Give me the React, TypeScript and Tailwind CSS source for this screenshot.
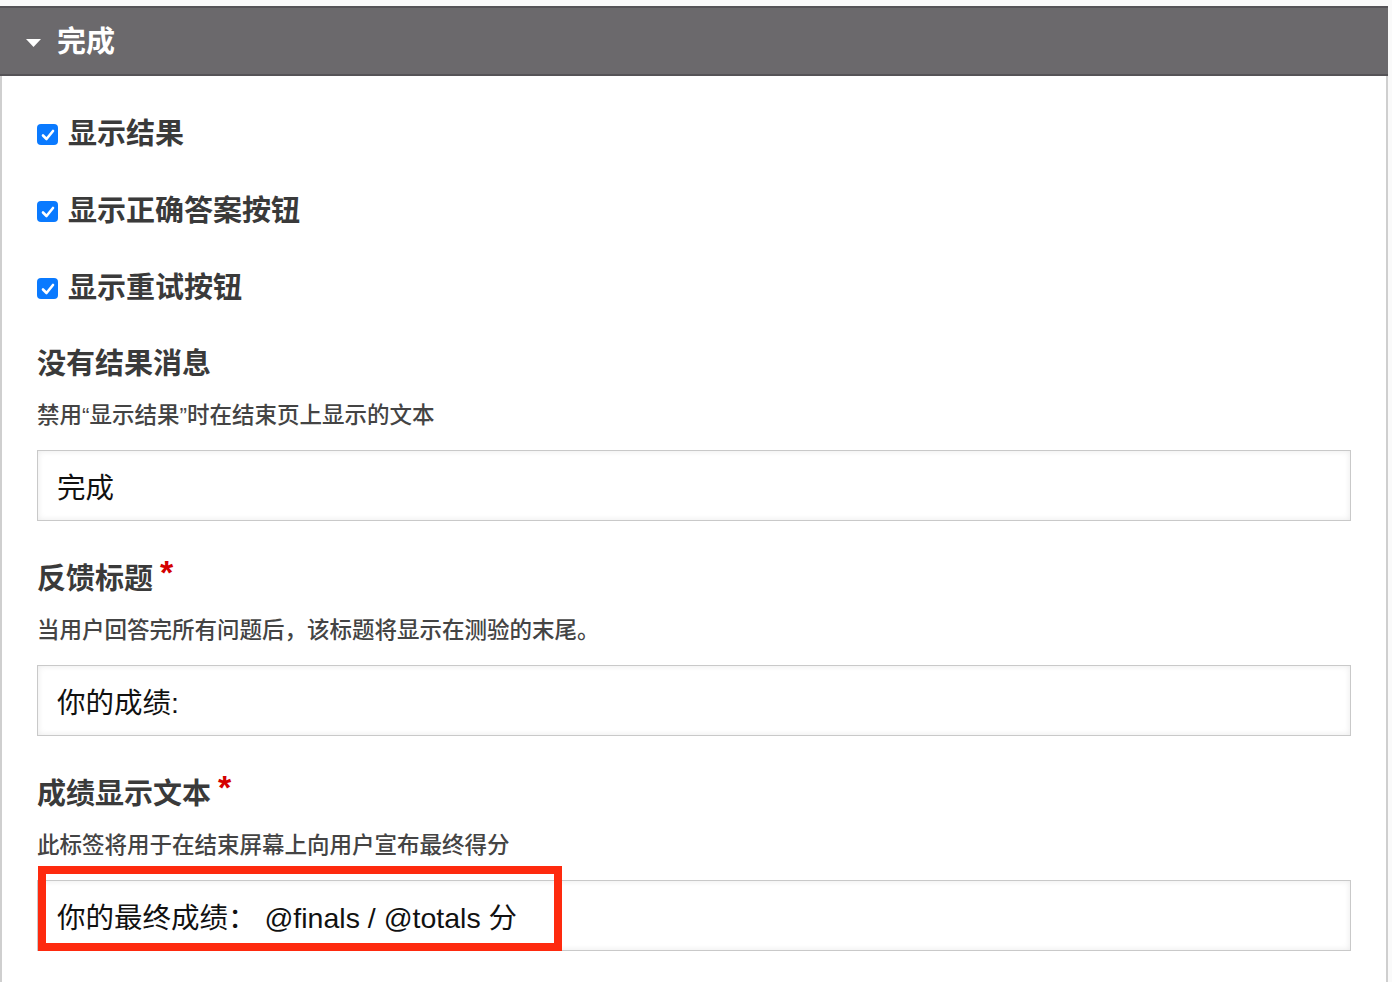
import React from 'react';

const font = { fontFamily: '"Liberation Sans", "Noto Sans CJK SC", sans-serif' };

function Check({ label }: { label: string }) {
  return (
    <div className="h-[77px] flex items-center">
      <span className="w-[21px] h-[21px] rounded-[4px] bg-[#0a7aff] flex items-center justify-center">
        <svg width="14" height="12" viewBox="0 0 14 12" fill="none">
          <path d="M2 6.5 L5.5 10 L12 2" stroke="white" strokeWidth="2.6" strokeLinecap="round" strokeLinejoin="round" />
        </svg>
      </span>
      <span className="ml-[10px] text-[29px] font-bold text-[#3a3a3a] leading-none">{label}</span>
    </div>
  );
}

function Field({
  title,
  desc,
  value,
  required,
  highlight,
}: {
  title: string;
  desc: string;
  value: string;
  required?: boolean;
  highlight?: boolean;
}) {
  return (
    <div>
      <div className="h-[40px] flex items-center text-[29px] font-bold text-[#3a3a3a]">
        {title}
        {required && (
          <span className="ml-[7px] text-[34px] font-bold text-[#d40000] relative -top-[8px]">*</span>
        )}
      </div>
      <div className="mt-[16px] h-[30px] flex items-center text-[22.5px] text-[#444] font-medium">{desc}</div>
      <div className="relative mt-[19px]">
        <input
          readOnly
          value={value}
          style={font}
          className="w-full h-[71px] border border-[#c9c9c9] bg-white pl-[19px] text-[28.5px] text-[#111] outline-none shadow-[inset_0_0_6px_rgba(0,0,0,0.09)]"
        />
        {highlight && (
          <div className="absolute left-[1px] -top-[14px] w-[524px] h-[85px] border-[8px] border-[#fe2a0e] pointer-events-none" />
        )}
      </div>
    </div>
  );
}

export default function App() {
  return (
    <div className="w-[1392px] h-[982px] bg-[#fafafa] pt-[6px] overflow-hidden" style={font}>
      <div className="w-[1388px] h-full bg-white border-l-2 border-r-2 border-[#cfcfcf]">
        <div className="h-[70px] -mx-[2px] bg-[#6b696c] border-t-2 border-b-2 border-[#555357] flex items-center pl-[26px] pt-[4px]">
          <svg width="15" height="8" viewBox="0 0 15 8">
            <path d="M0 0 L15 0 L7.5 8 Z" fill="white" />
          </svg>
          <span className="ml-[16px] text-[29px] font-bold text-white">完成</span>
        </div>
        <div className="pl-[35px] pr-[35px] pt-[20px]">
          <Check label="显示结果" />
          <Check label="显示正确答案按钮" />
          <Check label="显示重试按钮" />
          <div className="mt-[18px]">
            <Field title="没有结果消息" desc="禁用“显示结果”时在结束页上显示的文本" value="完成" />
          </div>
          <div className="mt-[39px]">
            <Field
              title="反馈标题"
              required
              desc="当用户回答完所有问题后，该标题将显示在测验的末尾。"
              value="你的成绩:"
            />
          </div>
          <div className="mt-[39px]">
            <Field
              title="成绩显示文本"
              required
              desc="此标签将用于在结束屏幕上向用户宣布最终得分"
              value="你的最终成绩： @finals / @totals 分"
              highlight
            />
          </div>
        </div>
      </div>
    </div>
  );
}
